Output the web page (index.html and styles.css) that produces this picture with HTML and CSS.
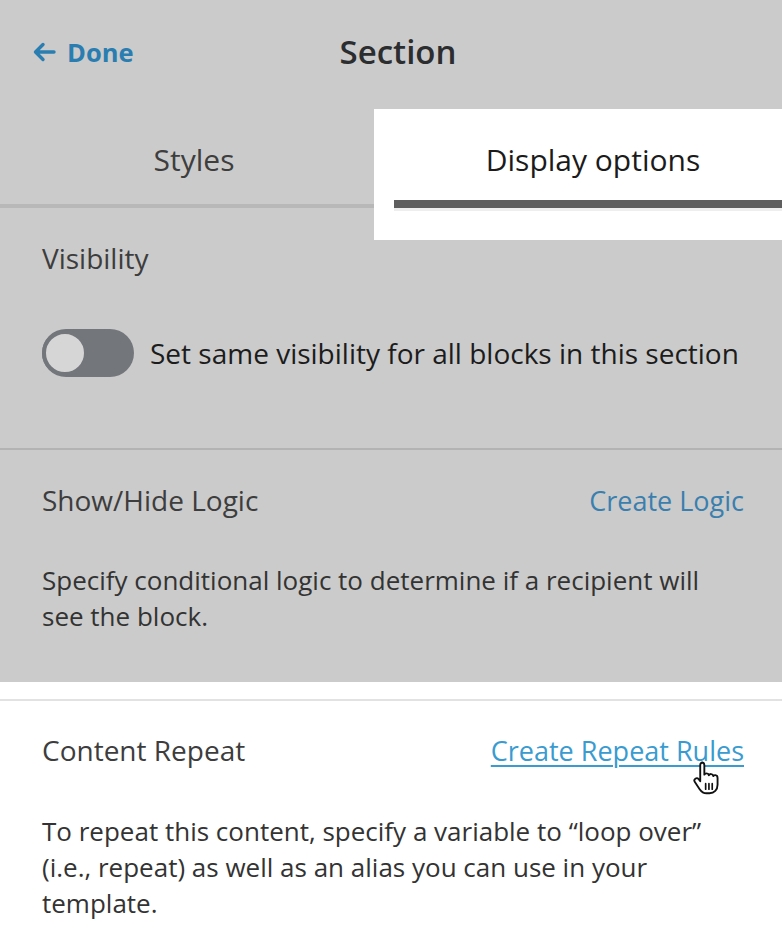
FILE: index.html
```html
<!DOCTYPE html>
<html lang="en">
<head>
<meta charset="utf-8">
<title>Section</title>
<link rel="stylesheet" href="styles.css">
</head>
<body>
<div class="panel">
  <div class="shade">
    <header class="topbar">
      <a class="done" href="#">
        <svg class="arrow" width="24" height="20" viewBox="0 0 24 20"><path d="M22 10H4M11 2.5L3.5 10L11 17.5" fill="none" stroke="currentColor" stroke-width="3.4" stroke-linecap="round" stroke-linejoin="round"/></svg>
        <span>Done</span>
      </a>
      <h1 class="title">Section</h1>
      <span class="spacer"></span>
    </header>
    <nav class="tabs">
      <div class="tab">Styles</div>
      <div class="tab-spot">
        <div class="tab active">Display options</div>
      </div>
    </nav>
    <section class="block visibility">
      <h2 class="label">Visibility</h2>
      <div class="toggle-row">
        <span class="toggle"><span class="knob"></span></span>
        <span class="toggle-text">Set same visibility for all blocks in this section</span>
      </div>
    </section>
    <section class="block logic">
      <div class="row">
        <h2 class="label">Show/Hide Logic</h2>
        <a class="link" href="#">Create Logic</a>
      </div>
      <p class="desc">Specify conditional logic to determine if a recipient will see the block.</p>
    </section>
  </div>
  <section class="block repeat">
    <div class="row">
      <h2 class="label">Content Repeat</h2>
      <a class="link underline" href="#">Create Repeat Rules<svg class="cursor" width="30" height="36" viewBox="0 0 32 38"><path d="M9.5 2.5c1.6 0 2.6 1.1 2.6 2.7v10.2c.6-.9 1.5-1.4 2.5-1.3 1.3.1 2.1 1 2.3 2 .5-.9 1.4-1.4 2.5-1.3 1.3.1 2 1 2.2 2.1.6-.7 1.4-1 2.3-.9 1.5.2 2.3 1.4 2.3 2.9v7.4c0 5.4-3.6 9-8.6 9h-3.2c-3.3 0-5.4-1.6-7.3-4.4l-5.1-7.6c-.9-1.3-.6-2.8.5-3.6 1.2-.8 2.7-.5 3.6.6l1.6 2.1V5.2c0-1.6 1.1-2.7 2.6-2.7z" fill="#fff" stroke="#111" stroke-width="2" stroke-linejoin="round"/><path d="M13.5 25v6M17 25v6M20.5 25v6" stroke="#111" stroke-width="1.8" stroke-linecap="round"/></svg></a>
    </div>
    <p class="desc">To repeat this content, specify a variable to “loop over” (i.e., repeat) as well as an alias you can use in your template.</p>
  </section>
</div>
</body>
</html>
```
FILE: styles.css
```css
* { box-sizing: border-box; }
html, body { margin: 0; padding: 0; background: #fff; }
body {
  font-family: "Open Sans", Lato, sans-serif;
  color: #333;
  width: 782px;
  overflow: hidden;
}
.panel { width: 782px; }
.shade { background: #cbcbcb; }

.topbar {
  height: 109px;
  display: grid;
  grid-template-columns: 1fr auto 1fr;
  align-items: center;
  padding: 0 32px 6px;
}
.done {
  display: flex;
  align-items: center;
  gap: 11px;
  color: #2a7db1;
  text-decoration: none;
  font-weight: 700;
  font-size: 25.5px;
  line-height: 36px;
}
.arrow { display: block; }
.title {
  margin: 0;
  font-size: 33px;
  line-height: 40px;
  font-weight: 600;
  color: #2b2d2f;
  padding-left: 14px;
}

.tabs {
  display: flex;
  height: 99px;
  border-bottom: 4px solid #b8b8b8;
}
.tab {
  flex: 0 0 394px;
  display: flex;
  align-items: center;
  justify-content: center;
  font-size: 30px;
  line-height: 40px;
  color: #3e3e3e;
  padding-top: 7px;
  padding-right: 6px;
}
.tab-spot {
  flex: 1;
  background: #fff;
  margin-left: -20px;
  padding-left: 20px;
  padding-bottom: 32px;
  margin-bottom: -36px;
  height: 131px;
}
.tab.active {
  height: 99px;
  color: #1b1b1b;
  border-bottom: 8px solid #5e5e5e;
  padding-top: 11px;
  padding-right: 0;
  padding-left: 10px;
}
.tab-spot .tab.active { box-shadow: 0 3px 0 #eeeeee; }

.block { padding: 0 38px 0 42px; }
.label {
  margin: 0;
  font-size: 28px;
  line-height: 36px;
  font-weight: 400;
  color: #3d3d3d;
}
.visibility {
  padding-top: 32px;
  height: 242px;
  border-bottom: 2px solid #b3b3b3;
}
.toggle-row {
  display: flex;
  align-items: center;
  gap: 16px;
  margin-top: 53px;
}
.toggle {
  width: 92px;
  height: 48px;
  border-radius: 24px;
  background: #73767b;
  display: flex;
  align-items: center;
  flex: none;
}
.knob {
  width: 46px;
  height: 46px;
  border-radius: 50%;
  background: #d6d6d6;
  border: 4px solid #73767b;
}
.toggle-text { font-size: 28px; line-height: 36px; color: #1c1c1c; }

.row {
  display: flex;
  justify-content: space-between;
  align-items: baseline;
}
.link {
  font-size: 27px;
  line-height: 36px;
  color: #3a7fae;
  text-decoration: none;
  position: relative;
}
.desc {
  margin: 0;
  font-size: 26px;
  line-height: 36px;
  color: #333;
}
.logic { padding-top: 32px; height: 232px; }
.logic .desc { margin-top: 43px; }

.repeat {
  border-top: 2px solid #e2e2e2;
  margin-top: 17px;
  padding-top: 31px;
  padding-bottom: 20px;
}
.repeat .desc { margin-top: 44px; color: #333; }
.link.underline {
  color: #3a9bd0;
  text-decoration: underline;
  text-underline-offset: 4px;
  text-decoration-thickness: 2px;
}
.cursor {
  position: absolute;
  right: 21px;
  top: 27px;
}
```
